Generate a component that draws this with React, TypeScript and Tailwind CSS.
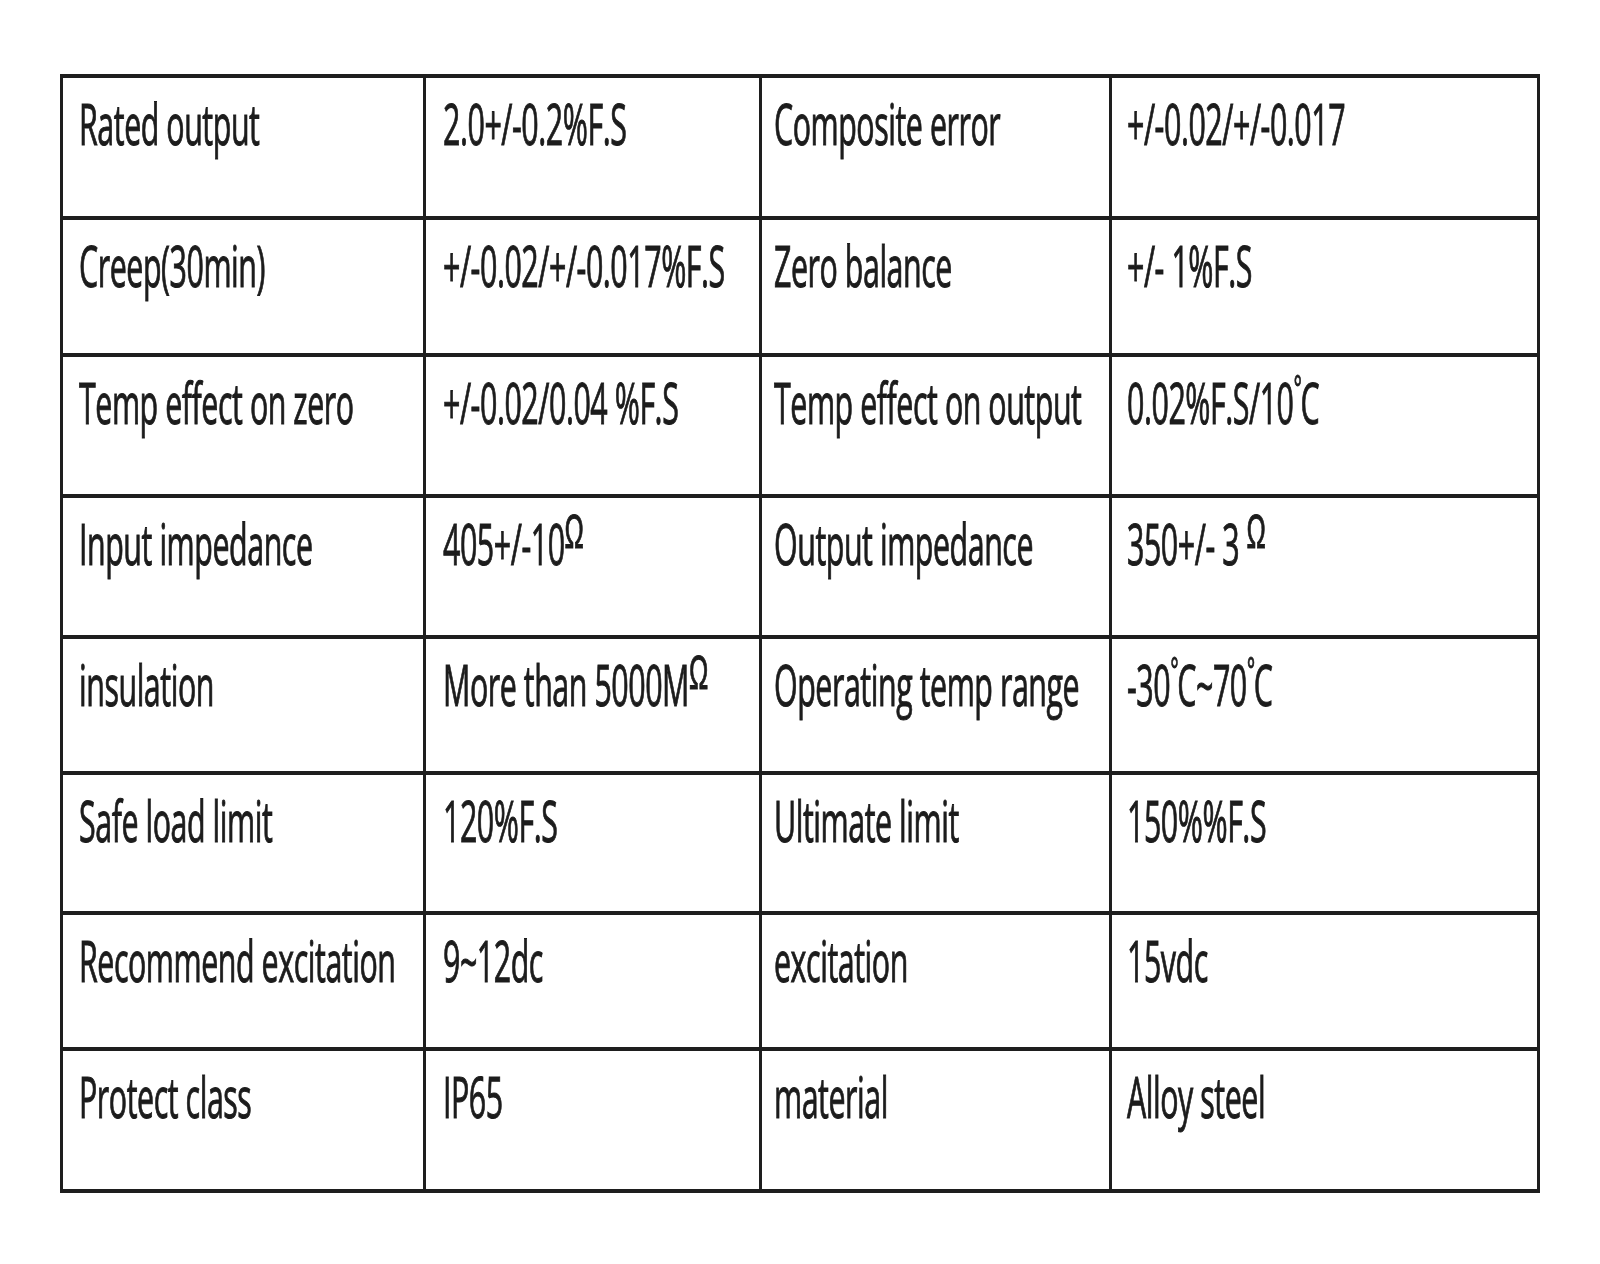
import React from 'react'

type Cell = React.ReactNode

// ℃ drawn as a small raised ring and a C, like the source sheet
const Deg: React.FC = () => (
  <span className="whitespace-nowrap">
    <span className="inline-block text-[0.7em] -translate-y-[12px] mr-[-1px] font-['Liberation_Sans',sans-serif]">°</span>C
  </span>
)

// Ω sits small and raised, without touching the line box
const Ohm: React.FC = () => (
  <span className="inline-block text-[0.85em] -translate-y-[9px] font-['Liberation_Sans',sans-serif]">Ω</span>
)

const rows: { h: string; cells: Cell[] }[] = [
  { h: 'h-[142px]', cells: ['Rated output', '2.0+/-0.2%F.S', 'Composite error', '+/-0.02/+/-0.017'] },
  { h: 'h-[137px]', cells: ['Creep(30min)', '+/-0.02/+/-0.017%F.S', 'Zero balance', '+/- 1%F.S'] },
  {
    h: 'h-[141px]',
    cells: ['Temp effect on zero', '+/-0.02/0.04 %F.S', 'Temp effect on output', <>0.02%F.S/10<Deg /></>],
  },
  {
    h: 'h-[141px]',
    cells: ['Input impedance', <>405+/-10<Ohm /></>, 'Output impedance', <>350+/- 3 <Ohm /></>],
  },
  {
    h: 'h-[136px]',
    cells: ['insulation', <>More than 5000M<Ohm /></>, 'Operating temp range', <>-30<Deg />~70<Deg /></>],
  },
  { h: 'h-[140px]', cells: ['Safe load limit', '120%F.S', 'Ultimate limit', '150%%F.S'] },
  { h: 'h-[136px]', cells: ['Recommend excitation', '9~12dc', 'excitation', '15vdc'] },
  { h: 'h-[142px]', cells: ['Protect class', 'IP65', 'material', 'Alloy steel'] },
]

const pads = ['pl-[16px]', 'pl-[17px]', 'pl-[12px]', 'pl-[15px]']

export default function App() {
  return (
    <div className="w-[1600px] h-[1264px] bg-white pt-[74px] pl-[60px]">
      <div className="w-[1480px] border-t-4 border-l-[3px] border-[#1e1e1e] grid grid-cols-[363px_336px_350px_428px] blur-[0.35px]">
        {rows.map((row, i) =>
          row.cells.map((c, j) => (
            <div
              key={i + '-' + j}
              className={`${row.h} ${pads[j]} border-r-[3px] border-b-4 border-[#1e1e1e] pt-[19px] overflow-visible whitespace-nowrap`}
            >
              <span className="inline-block origin-top scale-y-[1.85] text-[30.4px] leading-none tracking-[-0.45px] text-[#1c1c1c] font-['Open_Sans',sans-serif] [-webkit-text-stroke:0.55px_#1c1c1c]">
                {c}
              </span>
            </div>
          ))
        )}
      </div>
    </div>
  )
}
